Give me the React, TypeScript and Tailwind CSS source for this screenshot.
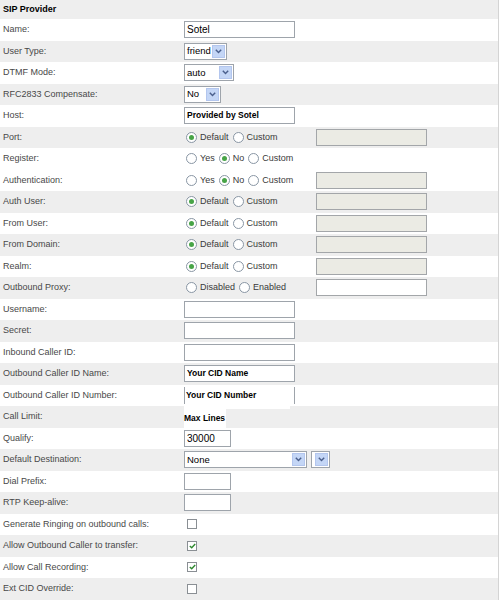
import * as React from 'react'

type Control =
	| {kind: 'text'; value?: string; w?: number; bold?: boolean}
	| {kind: 'select'; value: string; w: number}
	| {kind: 'radios'; options: string[]; checked: number; w: number; extra?: 'disabled' | 'white'}
	| {kind: 'check'; checked: boolean}
	| {kind: 'cidNumber'}
	| {kind: 'maxLines'}
	| {kind: 'dest'}

type Row = {label: string; shade: boolean; control: Control}

const rows: Row[] = [
	{label: 'Name:', shade: false, control: {kind: 'text', value: 'Sotel'}},
	{label: 'User Type:', shade: true, control: {kind: 'select', value: 'friend', w: 43}},
	{label: 'DTMF Mode:', shade: false, control: {kind: 'select', value: 'auto', w: 50}},
	{label: 'RFC2833 Compensate:', shade: true, control: {kind: 'select', value: 'No', w: 37}},
	{label: 'Host:', shade: false, control: {kind: 'text', value: 'Provided by Sotel', bold: true}},
	{label: 'Port:', shade: true, control: {kind: 'radios', options: ['Default', 'Custom'], checked: 0, w: 132, extra: 'disabled'}},
	{label: 'Register:', shade: false, control: {kind: 'radios', options: ['Yes', 'No', 'Custom'], checked: 1, w: 132}},
	{label: 'Authentication:', shade: false, control: {kind: 'radios', options: ['Yes', 'No', 'Custom'], checked: 1, w: 132, extra: 'disabled'}},
	{label: 'Auth User:', shade: true, control: {kind: 'radios', options: ['Default', 'Custom'], checked: 0, w: 132, extra: 'disabled'}},
	{label: 'From User:', shade: false, control: {kind: 'radios', options: ['Default', 'Custom'], checked: 0, w: 132, extra: 'disabled'}},
	{label: 'From Domain:', shade: true, control: {kind: 'radios', options: ['Default', 'Custom'], checked: 0, w: 132, extra: 'disabled'}},
	{label: 'Realm:', shade: false, control: {kind: 'radios', options: ['Default', 'Custom'], checked: 0, w: 132, extra: 'disabled'}},
	{label: 'Outbound Proxy:', shade: true, control: {kind: 'radios', options: ['Disabled', 'Enabled'], checked: -1, w: 132, extra: 'white'}},
	{label: 'Username:', shade: false, control: {kind: 'text'}},
	{label: 'Secret:', shade: true, control: {kind: 'text'}},
	{label: 'Inbound Caller ID:', shade: false, control: {kind: 'text'}},
	{label: 'Outbound Caller ID Name:', shade: true, control: {kind: 'text', value: 'Your CID Name', bold: true}},
	{label: 'Outbound Caller ID Number:', shade: false, control: {kind: 'cidNumber'}},
	{label: 'Call Limit:', shade: true, control: {kind: 'maxLines'}},
	{label: 'Qualify:', shade: false, control: {kind: 'text', value: '30000', w: 47}},
	{label: 'Default Destination:', shade: true, control: {kind: 'dest'}},
	{label: 'Dial Prefix:', shade: false, control: {kind: 'text', w: 47}},
	{label: 'RTP Keep-alive:', shade: true, control: {kind: 'text', w: 47}},
	{label: 'Generate Ringing on outbound calls:', shade: false, control: {kind: 'check', checked: false}},
	{label: 'Allow Outbound Caller to transfer:', shade: true, control: {kind: 'check', checked: true}},
	{label: 'Allow Call Recording:', shade: false, control: {kind: 'check', checked: true}},
	{label: 'Ext CID Override:', shade: true, control: {kind: 'check', checked: false}},
]

function Arrow() {
	return (
		<span className="w-[13px] h-[13px] bg-[#c4d6f6] border border-[#b3c6ee] flex items-center justify-center">
			<svg width="7" height="5" viewBox="0 0 7 5">
				<path d="M0.8 0.8 L3.5 3.6 L6.2 0.8" fill="none" stroke="#4a5f8c" strokeWidth="1.4"/>
			</svg>
		</span>
	)
}

function Select({value, w}: {value: string; w: number}) {
	return (
		<div className="h-[17px] border border-[#9ea4ab] bg-white flex items-center justify-between pl-[2px] pr-[1px] text-[9.5px] text-black" style={{width: w}}>
			<span>{value}</span>
			<Arrow/>
		</div>
	)
}

function TextBox({value, w = 111, bold}: {value?: string; w?: number; bold?: boolean}) {
	return (
		<div
			className={`h-[17px] border border-[#9ea4ab] bg-white flex items-center px-[2px] text-black ${bold ? 'font-bold text-[8.5px]' : 'text-[10px]'}`}
			style={{width: w}}
		>
			{value}
		</div>
	)
}

function Radio({checked}: {checked: boolean}) {
	return (
		<span className="w-[11px] h-[11px] rounded-full border border-[#8996a4] bg-white flex items-center justify-center shrink-0">
			{checked && <span className="w-[5px] h-[5px] rounded-full bg-[#47a447]"/>}
		</span>
	)
}

function Check({checked}: {checked: boolean}) {
	return (
		<span className="ml-[3px] w-[10px] h-[10px] border border-[#8a8f94] bg-white flex items-center justify-center">
			{checked && (
				<svg width="7" height="6" viewBox="0 0 7 6">
					<path d="M0.8 3 L2.7 4.8 L6.2 1" fill="none" stroke="#2f8a2f" strokeWidth="1.4"/>
				</svg>
			)}
		</span>
	)
}

function ControlCell({c}: {c: Control}) {
	switch (c.kind) {
		case 'text':
			return <TextBox value={c.value} w={c.w} bold={c.bold}/>
		case 'select':
			return <Select value={c.value} w={c.w}/>
		case 'check':
			return <Check checked={c.checked}/>
		case 'radios':
			return (
				<div className="flex items-center">
					<div className="flex items-center gap-[4px] pl-[2px]" style={{width: c.w}}>
						{c.options.map((o, i) => (
							<span key={o} className="flex items-center gap-[3px]">
								<Radio checked={i === c.checked}/>
								<span className="text-[9px] text-[#3a3a3a]">{o}</span>
							</span>
						))}
					</div>
					{c.extra === 'disabled' && <div className="w-[111px] h-[17px] border border-[#a3a6a9] bg-[#ebebe4]"/>}
					{c.extra === 'white' && <div className="w-[111px] h-[17px] border border-[#a3a6a9] bg-white"/>}
				</div>
			)
		case 'cidNumber':
			return (
				<div className="w-[111px] h-[17px] border-l border-r border-[#9ea4ab] bg-white flex items-center px-[1px] font-bold text-[8.5px] text-black">
					Your CID Number
				</div>
			)
		case 'maxLines':
			return (
				<div className="flex flex-col self-stretch">
					<div className="w-[106px] h-[3px] bg-white"/>
					<div className="w-[42px] flex-1 bg-white flex items-center font-bold text-[8.5px] text-black">Max Lines</div>
				</div>
			)
		case 'dest':
			return (
				<div className="flex items-center gap-[4px]">
					<Select value="None" w={123}/>
					<div className="w-[19px] h-[17px] border border-[#9ea4ab] bg-white flex items-center justify-end pr-[1px]">
						<Arrow/>
					</div>
				</div>
			)
	}
}

export default function App() {
	return (
		<div className="w-[500px] h-[600px] bg-white overflow-hidden" style={{fontFamily: '"Liberation Sans", Arial, sans-serif'}}>
			<div className="w-[499px] border-r border-[#d4d4d4]">
				<div className="h-[19px] bg-[#eeeeee] flex items-center pl-[3px]">
					<p className="text-[9px] font-bold text-black">SIP Provider</p>
				</div>
				{rows.map(row => (
					<div key={row.label} className={`h-[21.5px] flex items-center ${row.shade ? 'bg-[#eeeeee]' : 'bg-white'}`}>
						<div className="w-[184px] pl-[3px] text-[9px] text-[#484848]">{row.label}</div>
						<div className="flex items-center h-full">
							<ControlCell c={row.control}/>
						</div>
					</div>
				))}
			</div>
		</div>
	)
}
